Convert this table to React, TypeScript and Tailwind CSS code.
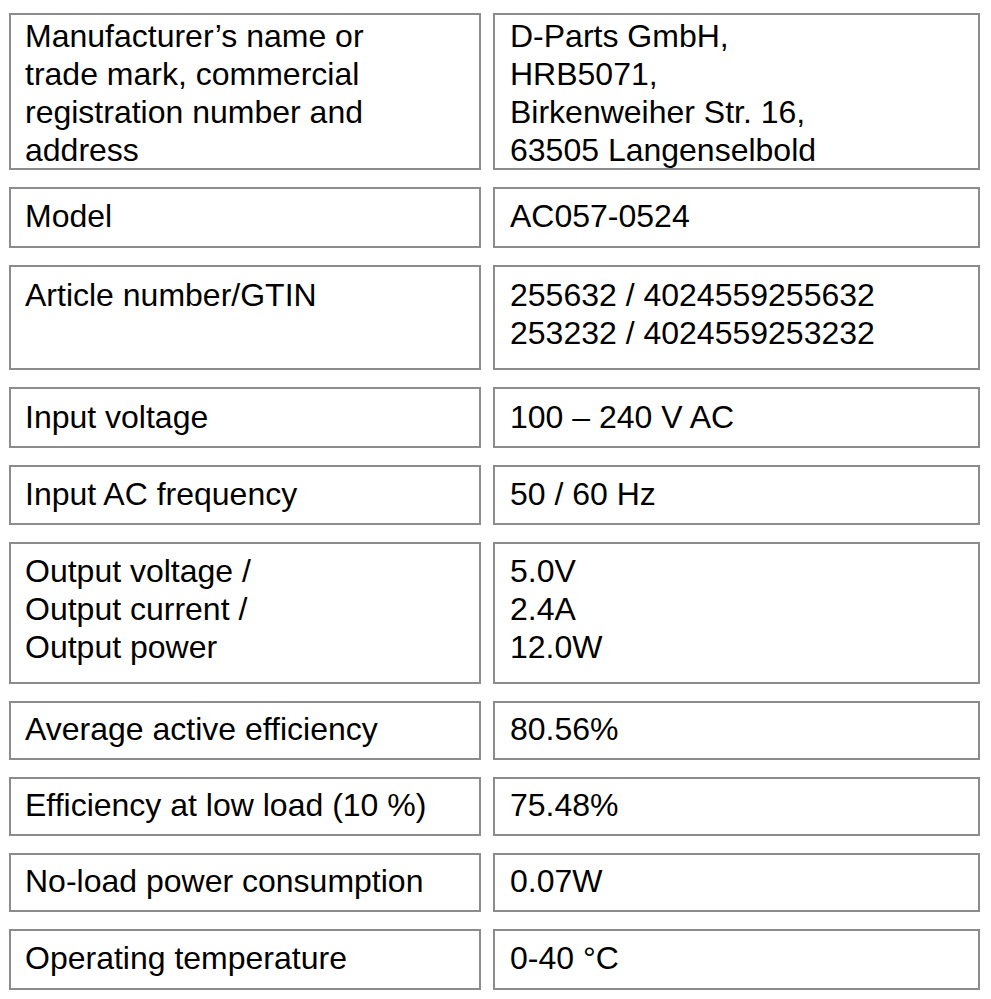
type Spec = {
  label: string[];
  value: string[];
  height: string;
  pad: string;
};

const rows: Spec[] = [
  {
    label: ["Manufacturer’s name or", "trade mark, commercial", "registration number and", "address"],
    value: ["D-Parts GmbH,", "HRB5071,", "Birkenweiher Str. 16,", "63505 Langenselbold"],
    height: "h-[157px]",
    pad: "pt-[2px]",
  },
  { label: ["Model"], value: ["AC057-0524"], height: "h-[61px]", pad: "pt-[8px]" },
  {
    label: ["Article number/GTIN"],
    value: ["255632 / 4024559255632", "253232 / 4024559253232"],
    height: "h-[105px]",
    pad: "pt-[9px]",
  },
  { label: ["Input voltage"], value: ["100 – 240 V AC"], height: "h-[61px]", pad: "pt-[9px]" },
  { label: ["Input AC frequency"], value: ["50 / 60 Hz"], height: "h-[60px]", pad: "pt-[8px]" },
  {
    label: ["Output voltage /", "Output current /", "Output power"],
    value: ["5.0V", "2.4A", "12.0W"],
    height: "h-[142px]",
    pad: "pt-[8px]",
  },
  { label: ["Average active efficiency"], value: ["80.56%"], height: "h-[59px]", pad: "pt-[7px]" },
  { label: ["Efficiency at low load (10 %)"], value: ["75.48%"], height: "h-[59px]", pad: "pt-[7px]" },
  { label: ["No-load power consumption"], value: ["0.07W"], height: "h-[59px]", pad: "pt-[7px]" },
  { label: ["Operating temperature"], value: ["0-40 °C"], height: "h-[61px]", pad: "pt-[8px]" },
];

function Cell({ lines, className }: { lines: string[]; className: string }) {
  return (
    <div className={`border-2 border-[#8c8c8c] bg-white text-[32px] leading-[38px] text-black ${className}`}>
      {lines.map(l => (
        <div key={l} className="whitespace-nowrap">
          {l}
        </div>
      ))}
    </div>
  );
}

export default function App() {
  return (
    <div
      className="min-h-[999px] w-[991px] bg-white pl-[9px] pt-[13px]"
      style={{ fontFamily: '"Liberation Sans", Arial, sans-serif' }}>
      <div className="flex flex-col gap-[17px]">
        {rows.map(r => (
          <div key={r.label[0]} className="flex gap-[12px]">
            <Cell lines={r.label} className={`w-[472px] pl-[14px] ${r.height} ${r.pad}`} />
            <Cell lines={r.value} className={`w-[487px] pl-[15px] ${r.height} ${r.pad}`} />
          </div>
        ))}
      </div>
    </div>
  );
}
